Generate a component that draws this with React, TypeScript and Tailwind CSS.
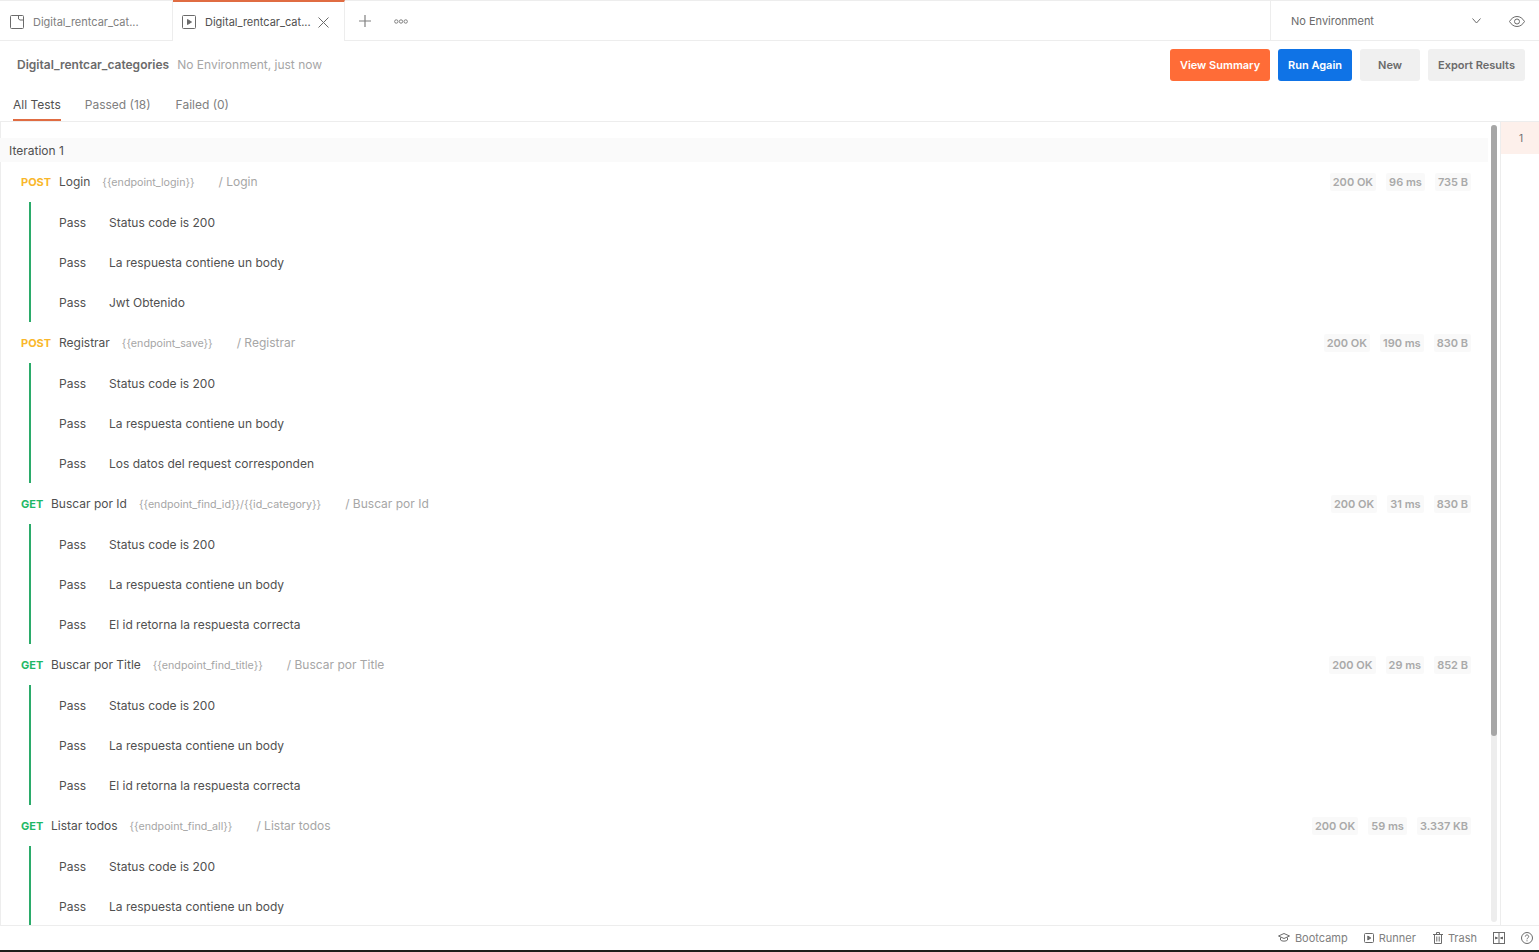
import React from 'react';

type Req = {
  method: 'POST' | 'GET';
  name: string;
  url: string;
  status: string;
  time: string;
  size: string;
  tests: string[];
};

const requests: Req[] = [
  { method: 'POST', name: 'Login', url: '{{endpoint_login}}', status: '200 OK', time: '96 ms', size: '735 B', tests: ['Status code is 200', 'La respuesta contiene un body', 'Jwt Obtenido'] },
  { method: 'POST', name: 'Registrar', url: '{{endpoint_save}}', status: '200 OK', time: '190 ms', size: '830 B', tests: ['Status code is 200', 'La respuesta contiene un body', 'Los datos del request corresponden'] },
  { method: 'GET', name: 'Buscar por Id', url: '{{endpoint_find_id}}/{{id_category}}', status: '200 OK', time: '31 ms', size: '830 B', tests: ['Status code is 200', 'La respuesta contiene un body', 'El id retorna la respuesta correcta'] },
  { method: 'GET', name: 'Buscar por Title', url: '{{endpoint_find_title}}', status: '200 OK', time: '29 ms', size: '852 B', tests: ['Status code is 200', 'La respuesta contiene un body', 'El id retorna la respuesta correcta'] },
  { method: 'GET', name: 'Listar todos', url: '{{endpoint_find_all}}', status: '200 OK', time: '59 ms', size: '3.337 KB', tests: ['Status code is 200', 'La respuesta contiene un body'] },
];

function Badge({ children }: { children: React.ReactNode }) {
  return <span className="rounded-[2px] bg-[#f9f9f9] px-[3px] text-[11px] leading-[18px] font-semibold text-[#a9a9a9]">{children}</span>;
}

function RequestBlock({ req }: { req: Req }) {
  return (
    <div>
      <div className="flex h-[41px] items-center pl-[21px] pr-[17px]">
        <div className="flex items-baseline pt-[2px]">
          <span className={`w-[30px] text-[11px] font-bold ${req.method === 'POST' ? 'mr-[8px] text-[#f9b72b]' : 'text-[#1fb866]'}`}>
            {req.method}
          </span>
          <span className="text-[12px] text-[#505050]">{req.name}</span>
          <span className="ml-[12px] text-[10.7px] text-[#a6a6a6]">{req.url}</span>
          <span className="ml-[24px] text-[12px] text-[#a6a6a6]">/ {req.name}</span>
        </div>
        <div className="ml-auto flex items-center gap-[10px]">
          <Badge>{req.status}</Badge>
          <Badge>{req.time}</Badge>
          <Badge>{req.size}</Badge>
        </div>
      </div>
      <div className="ml-[29px] border-l-2 border-[#2bab6a] pl-[28px]">
        {req.tests.map((t, i) => (
          <div key={i} className="flex h-[40px] items-center pt-[1px] text-[12px] text-[#505050]">
            <span className="w-[50px]">Pass</span>
            <span>{t}</span>
          </div>
        ))}
      </div>
    </div>
  );
}

export default function App() {
  return (
    <div className="flex h-[952px] w-[1539px] flex-col overflow-hidden bg-white font-['Inter',sans-serif]">
      {/* tab bar */}
      <div className="flex h-[41px] shrink-0 border-t border-b border-[#ededed]">
        <div className="flex w-[173px] items-center border-r border-[#ededed] pt-[3px] pl-[10px]">
          <svg width="14" height="14" viewBox="0 0 14 14" fill="none" stroke="#6b6b6b" strokeWidth="1">
            <path d="M1.500 0.500h11a1 1 0 0 1 1 1v11a1 1 0 0 1-1 1h-11a1 1 0 0 1-1-1v-11a1 1 0 0 1 1-1z" />
            <path d="M8.500 0.500v3.500l1.500 1h3.500" />
          </svg>
          <span className="ml-[9px] text-[11px] text-[#808080]">Digital_rentcar_cat...</span>
        </div>
        <div className="-mt-px -mb-px flex w-[172px] items-center border-r border-t-2 border-[#ededed] border-t-[#e06c42] bg-white pt-[1px] pl-[9px]">
          <svg width="14" height="14" viewBox="0 0 14 14" fill="none" stroke="#6b6b6b" strokeWidth="1">
            <rect x="0.500" y="0.500" width="13" height="13" rx="1" />
            <path d="M5.500 4.500l4 2.500-4 2.500z" fill="#6b6b6b" />
          </svg>
          <span className="ml-[9px] text-[11px] text-[#505050]">Digital_rentcar_cat...</span>
          <svg className="ml-[7px]" width="11" height="11" viewBox="0 0 11 11" fill="none" stroke="#6b6b6b" strokeWidth="1">
            <path d="M0.500 0.500l10 10M10.500 0.500l-10 10" />
          </svg>
        </div>
        <div className="ml-[14px] flex items-center pt-[1px]">
          <svg width="12" height="12" viewBox="0 0 12 12" fill="none" stroke="#808080" strokeWidth="1.200">
            <path d="M6 0v12M0 6h12" />
          </svg>
        </div>
        <div className="ml-[23px] flex items-center pt-[1px]">
          <svg width="14" height="5" viewBox="0 0 14 5" fill="none" stroke="#808080" strokeWidth="1">
            <circle cx="2.300" cy="2.500" r="1.700" />
            <circle cx="7" cy="2.500" r="1.700" />
            <circle cx="11.700" cy="2.500" r="1.700" />
          </svg>
        </div>
        <div className="ml-auto flex w-[269px] items-center border-l border-[#ededed] pt-[1px] pl-[20px]">
          <span className="text-[11px] text-[#6b6b6b]">No Environment</span>
          <svg className="ml-[98px]" width="9" height="6" viewBox="0 0 9 6" fill="none" stroke="#6b6b6b" strokeWidth="1">
            <path d="M0.500 0.500l4 4.500 4-4.500" />
          </svg>
          <svg className="ml-[28px]" width="16" height="11" viewBox="0 0 16 11" fill="none" stroke="#6b6b6b" strokeWidth="1">
            <path d="M0.500 5.500c2-3.300 4.500-5 7.500-5s5.500 1.700 7.500 5c-2 3.300-4.500 5-7.500 5s-5.500-1.700-7.500-5z" />
            <circle cx="8" cy="5.500" r="2.500" />
          </svg>
        </div>
      </div>

      {/* run header */}
      <div className="flex h-[48px] shrink-0 items-center pl-[17px] pr-[14px]">
        <span className="text-[12px] font-semibold text-[#6b6b6b]">Digital_rentcar_categories</span>
        <span className="ml-[8px] text-[12px] text-[#a6a6a6]">No Environment, just now</span>
        <div className="ml-auto flex items-center gap-[8px] text-[11px] font-semibold">
          <button className="h-[32px] w-[100px] rounded-[3px] bg-[#ff6c37] text-white">View Summary</button>
          <button className="h-[32px] w-[74px] rounded-[3px] bg-[#0f73e6] text-white">Run Again</button>
          <button className="h-[32px] w-[60px] rounded-[3px] bg-[#f0f0f0] text-[#6b6b6b]">New</button>
          <button className="h-[32px] w-[97px] rounded-[3px] bg-[#f0f0f0] text-[#6b6b6b]">Export Results</button>
        </div>
      </div>

      {/* result filters */}
      <div className="flex h-[33px] shrink-0 items-stretch gap-[24px] border-b border-[#ededed] pl-[13px] text-[12px]">
        <div className="flex items-center border-b-2 border-[#e06c42] pt-[1px] text-[#505050]">All Tests</div>
        <div className="flex items-center pb-[1px] text-[#808080]">Passed (18)</div>
        <div className="ml-[1px] flex items-center pb-[1px] text-[#808080]">Failed (0)</div>
      </div>

      {/* results */}
      <div className="flex min-h-0 flex-1">
        <div className="min-w-0 flex-1 overflow-hidden pt-[16px] shadow-[inset_1px_0_0_#ededed]">
          <div className="-mb-px flex h-[24px] items-center bg-[#fafafa] pt-[1px] pl-[9px] text-[12px] text-[#505050]">Iteration 1</div>
          {requests.map((r) => (
            <RequestBlock key={r.name} req={r} />
          ))}
        </div>
        <div className="mt-[3px] mb-[3px] ml-[3px] w-[6px] shrink-0 rounded-[3px] bg-[#ededed]">
          <div className="h-[611px] w-[6px] rounded-[3px] bg-[#a6a6a6]" />
        </div>
        <div className="ml-[3px] w-[39px] shrink-0 border-l border-[#ededed]">
          <div className="flex h-[32px] items-center justify-center bg-[#fdf0eb] pl-[2px] text-[10px] text-[#6b6b6b]">1</div>
        </div>
      </div>

      {/* status bar */}
      <div className="flex h-[25px] shrink-0 items-center justify-end border-t border-[#ededed] pr-[6px] text-[11px] text-[#808080]">
        <svg width="12" height="10" viewBox="0 0 12 10" fill="none" stroke="#6b6b6b" strokeWidth="1">
          <path d="M0.500 3l5.500-2.500 5.500 2.500-5.500 2.500z" />
          <path d="M2.500 4.500v2.500c1 1.500 6 1.500 7 0v-2.500" />
        </svg>
        <span className="ml-[5px]">Bootcamp</span>
        <svg className="ml-[16px]" width="10" height="10" viewBox="0 0 10 10" fill="none" stroke="#6b6b6b" strokeWidth="1">
          <rect x="0.500" y="0.500" width="9" height="9" rx="1" />
          <path d="M3.800 3l3 2-3 2z" fill="#6b6b6b" />
        </svg>
        <span className="ml-[5px]">Runner</span>
        <svg className="ml-[17px]" width="10" height="12" viewBox="0 0 10 12" fill="none" stroke="#6b6b6b" strokeWidth="1">
          <path d="M0 2.500h10M3.500 2.500v-2h3v2M1.500 2.500v9h7v-9M3.800 4.500v5M6.200 4.500v5" />
        </svg>
        <span className="ml-[5px]">Trash</span>
        <svg className="ml-[16px]" width="12" height="12" viewBox="0 0 12 12" fill="none" stroke="#6b6b6b" strokeWidth="1">
          <rect x="0.500" y="0.500" width="11" height="11" />
          <path d="M6 0.500v11" />
          <path d="M2.500 5l2 1-2 1zM9.500 5l-2 1 2 1z" fill="#6b6b6b" />
        </svg>
        <svg className="ml-[16px]" width="12" height="12" viewBox="0 0 12 12" fill="none" stroke="#6b6b6b" strokeWidth="1">
          <circle cx="6" cy="6" r="5.500" />
          <path d="M4.300 4.600c0-2.200 3.400-2.200 3.400 0 0 1.300-1.700 1.300-1.700 2.700M6 8.300v1" />
        </svg>
      </div>
      <div className="h-[2px] shrink-0 bg-[#1c1c1c]" />
    </div>
  );
}
